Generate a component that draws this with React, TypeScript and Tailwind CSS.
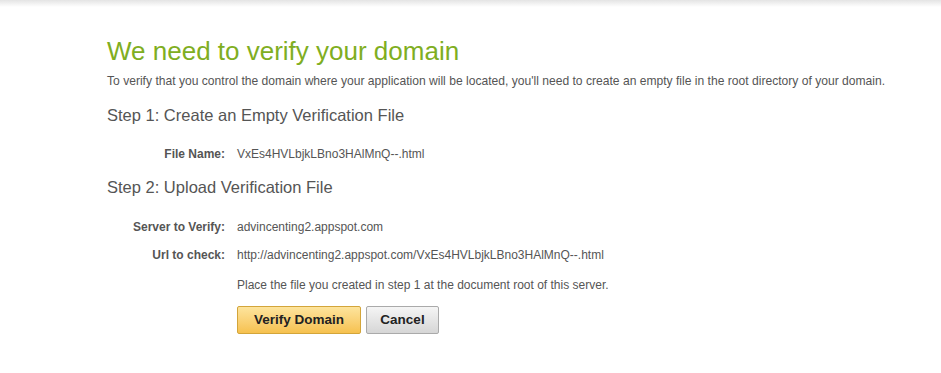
import React from 'react';

const Field = ({ label, className = '', children }: { label?: string; className?: string; children: React.ReactNode }) => (
  <div className={`flex items-baseline leading-[16px] ${className}`}>
    <div className="w-[118px] shrink-0 text-right font-bold text-[#555]">{label}</div>
    <div className="pl-[12px] text-[#555]">{children}</div>
  </div>
);

export default function App() {
  return (
    <div className="relative h-[373px] w-[941px] bg-white font-['Liberation_Sans',Arial,sans-serif]">
      {/* top shadow */}
      <div className="absolute inset-x-0 top-0 h-[7px] bg-gradient-to-b from-[#e4e4e4] to-white" />

      <div className="pl-[107px] pt-[36px] text-[12px]">
        <h1 className="text-[26px] leading-[30px] text-[#7fae22]">We need to verify your domain</h1>
        <p className="mt-[7px] whitespace-nowrap text-[12.1px] leading-[16px] text-[#555]">
          To verify that you control the domain where your application will be located, you'll need to create an empty file in the root directory of your domain.
        </p>

        <h2 className="mt-[16px] text-[16.5px] leading-[20px] text-[#555]">Step 1: Create an Empty Verification File</h2>
        <Field label="File Name:" className="mt-[21px]">VxEs4HVLbjkLBno3HAlMnQ--.html</Field>

        <h2 className="mt-[15px] text-[16.5px] leading-[20px] text-[#555]">Step 2: Upload Verification File</h2>
        <Field label="Server to Verify:" className="mt-[22px]">advincenting2.appspot.com</Field>
        <Field label="Url to check:" className="mt-[12px]">http://advincenting2.appspot.com/VxEs4HVLbjkLBno3HAlMnQ--.html</Field>
        <Field className="mt-[14px]">Place the file you created in step 1 at the document root of this server.</Field>

        <div className="mt-[13px] flex gap-[5px] pl-[130px]">
          <button className="h-[28px] w-[124px] rounded-[2px] border border-[#d3a53a] bg-gradient-to-b from-[#fde49c] to-[#f6c14e] text-[13.5px] font-bold text-[#222]">
            Verify Domain
          </button>
          <button className="h-[28px] w-[73px] rounded-[2px] border border-[#aaa] bg-gradient-to-b from-[#f5f5f5] to-[#d6d6d6] text-[13.5px] font-bold text-[#222]">
            Cancel
          </button>
        </div>
      </div>
    </div>
  );
}
